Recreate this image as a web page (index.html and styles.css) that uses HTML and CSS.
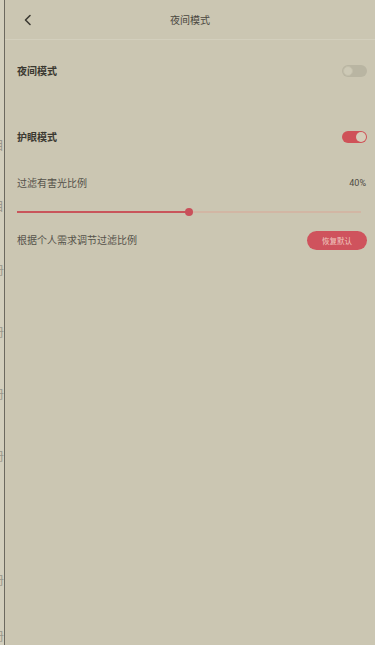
FILE: index.html
```html
<!DOCTYPE html>
<html lang="zh">
<head>
<meta charset="utf-8">
<title>夜间模式</title>
<link rel="stylesheet" href="styles.css">
</head>
<body>
<div class="screen">
  <div class="under">
    <span class="g g1">目</span>
    <span class="g g2">目</span>
    <span class="g g3">册</span>
    <span class="g g4">册</span>
    <span class="g g4">册</span>
    <span class="g g4">册</span>
    <span class="g g5">册</span>
    <span class="g g6">册</span>
  </div>
  <div class="panel">
    <header class="bar">
      <span class="back">
        <svg width="10" height="12" viewBox="0 0 10 12"><path d="M7 1.5 L2.5 6 L7 10.5" fill="none" stroke="#3c3a33" stroke-width="1.6" stroke-linecap="round" stroke-linejoin="round"/></svg>
      </span>
      <span class="title">夜间模式</span>
      <span class="spacer"></span>
    </header>
    <section class="content">
      <div class="row row-night">
        <span class="label strong">夜间模式</span>
        <span class="toggle off"><span class="knob"></span></span>
      </div>
      <div class="row row-eye">
        <span class="label strong">护眼模式</span>
        <span class="toggle on"><span class="knob"></span></span>
      </div>
      <div class="row row-filter">
        <span class="label">过滤有害光比例</span>
        <span class="pct">40%</span>
      </div>
      <div class="slider">
        <span class="fill" style="width:50%"></span>
        <span class="thumb"></span>
        <span class="rest"></span>
      </div>
      <div class="row row-reset">
        <span class="label">根据个人需求调节过滤比例</span>
        <span class="btn">恢复默认</span>
      </div>
    </section>
  </div>
</div>
</body>
</html>
```

FILE: styles.css
```css
* { box-sizing: border-box; }
html, body { margin: 0; padding: 0; }
body {
  width: 375px;
  height: 645px;
  overflow: hidden;
  font-family: "Noto Sans CJK SC", "Noto Sans", sans-serif;
  background: #cbc6b2;
}
.screen {
  display: flex;
  width: 375px;
  height: 645px;
}
.under {
  width: 4px;
  flex: none;
  background: #d3cfbd;
  display: flex;
  flex-direction: column;
  align-items: flex-end;
  overflow: hidden;
  color: #9a978c;
  font-size: 12px;
  line-height: 14px;
}
.g { display: block; white-space: nowrap; }
.g1 { margin-top: 138px; }
.g2 { margin-top: 47px; }
.g3 { margin-top: 50px; }
.g4 { margin-top: 48px; }
.g5 { margin-top: 110px; }
.g6 { margin-top: 42px; }
.panel {
  flex: 1;
  border-left: 1px solid #6c695f;
  background: #cbc6b2;
  display: flex;
  flex-direction: column;
}
.bar {
  height: 40px;
  flex: none;
  display: flex;
  align-items: center;
  border-bottom: 1px solid #d3cfbd;
  padding: 0 0 0 18px;
}
.back { width: 20px; display: flex; align-items: center; }
.title {
  flex: 1;
  text-align: center;
  font-size: 10px;
  color: #4a4740;
  padding-right: 22px;
  margin-left: -16px;
}
.spacer { width: 0; }
.content {
  padding: 0 8px 0 12px;
}
.row {
  display: flex;
  align-items: center;
  justify-content: space-between;
}
.label {
  font-size: 10px;
  color: #55524a;
  line-height: 14px;
}
.label.strong { font-weight: 700; color: #3a3830; }
.row-night { margin-top: 24px; height: 14px; }
.row-eye { margin-top: 52px; height: 14px; }
.row-filter { margin-top: 32px; height: 14px; }
.pct { font-size: 9px; color: #4e4b43; font-family: "Roboto", "Liberation Sans", sans-serif; margin-right: 1px; }
.toggle {
  width: 25px;
  height: 12px;
  border-radius: 6px;
  display: flex;
  align-items: center;
  padding: 0 1px;
}
.toggle .knob {
  width: 10px;
  height: 10px;
  border-radius: 50%;
  display: block;
}
.toggle.off { background: #b9b5a2; }
.toggle.off .knob { background: #cdc9b6; border: 1px solid #c3bfab; }
.toggle.on { background: #cf5258; justify-content: flex-end; }
.toggle.on .knob { background: #d6ceba; }
.slider {
  margin-top: 18px;
  height: 8px;
  display: flex;
  align-items: center;
  margin-right: 6px;
}
.slider .fill {
  display: block;
  height: 2px;
  background: #c9555b;
  flex: none;
  width: 50%;
}
.slider .thumb {
  display: block;
  width: 8px;
  height: 8px;
  border-radius: 50%;
  background: #c9505a;
  flex: none;
  margin-left: -4px;
  margin-right: -4px;
  position: relative;
  z-index: 1;
}
.slider .rest {
  display: block;
  flex: 1;
  height: 2px;
  background: #d2b6a4;
}
.row-reset { margin-top: 14px; height: 20px; }
.btn {
  width: 60px;
  height: 19px;
  border-radius: 10px;
  background: #cf535d;
  color: #f0c9c0;
  font-size: 7.5px;
  display: flex;
  align-items: center;
  justify-content: center;
}
```
